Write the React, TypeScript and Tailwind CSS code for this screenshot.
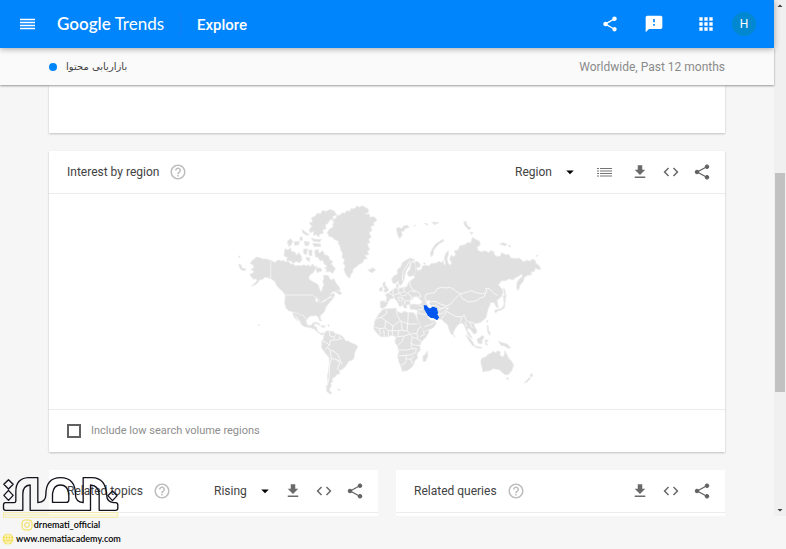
import clsx from "clsx"
import { MdApps, MdArrowDropDown, MdArrowDropUp, MdCode, MdFeedback, MdFileDownload, MdHelpOutline, MdShare } from "react-icons/md"

// outlines of the big land masses, 3 units to a pixel
const WEST_LAND: string[] = [
  // alaska
  "M60,190 66,182 72,178 80,171 90,173 98,177 108,177 121,181V236L110,232 104,232 98,238 88,240 84,248 76,254 64,258 76,248 82,240 74,236 70,238 66,232 62,230 60,222 68,220 72,214 62,208 72,204 70,196Z",
  // canada
  "M123,181 135,188 140,182 150,180 154,184 160,180 166,186 175,184 182,192 190,192 197,198 205,196 214,198 222,194 228,198 235,194 240,200 248,192 254,200 262,198 256,206 250,218 240,224 236,234 240,240 250,246 262,252 266,258 270,272 275,275 278,262 282,254 278,244 282,236 280,226 288,226 296,228 300,238 304,240 312,236 318,250 322,254 328,262 331,270 318,274 306,276 300,284 312,280 314,288 308,292 302,288 290,296 280,302 272,308 266,306 262,294 248,284H165L158,274 150,268 140,256 134,244 123,236Z",
  // usa
  "M166,286H248L258,292 256,302 262,308 266,296 270,308 282,306 292,298 304,292 312,292 300,306 292,316 286,324 284,334 274,344 270,350 274,362 270,364 264,350 258,346 248,348 240,348 234,354 230,360 226,352 220,346 212,344 204,340 190,336 176,332 168,324 164,308Z",
  // mexico and central america
  "M188,338 204,341 212,345 220,348 228,358 229,368 234,376 244,376 248,370 256,369 252,378 260,382 262,392 270,400 280,399 284,404 274,404 262,396 254,388 244,384 236,382 224,380 214,374 210,364 204,356 198,348 196,346 200,356 204,364 198,358 192,350Z",
  // greenland
  "M292,98 298,88 310,80 308,72 314,66 306,62 320,52 318,46 330,46 336,38 345,40 350,32 360,34 362,26 374,26 380,18 388,22 396,17 405,22 414,26 416,36 404,42 418,42 420,52 430,50 438,55 440,62 430,68 432,76 422,80 426,92 418,96 420,106 424,110 416,118 420,128 412,132 416,142 420,150 412,152 416,164 404,166 412,176 402,178 398,188 388,192 380,200 370,206 368,216 362,224 360,234 352,230 346,220 342,208 346,198 340,190 344,180 336,172 338,160 332,150 330,138 324,130 326,124 312,118 308,112 298,110Z",
  "M413,208 420,210 425,204 434,206 436,211 426,218 418,214Z",
  // arctic islands
  "M238,68 248,66 244,54 256,48 262,40 272,42 276,32 290,34 300,28 314,34 319,44 308,50 310,56 300,60 292,72 286,74 288,86 278,90 280,100 270,102 266,112 260,104 250,106 252,94 240,98 238,88 246,80Z",
  "M165,146 174,150 182,143 184,154 194,156 200,166 206,158 214,168 216,180 208,188 198,184 192,190 180,182 170,182 172,172 162,168Z",
  "M254,152 264,148 268,160 278,152 284,164 296,168 298,178 308,184 304,192 316,206 308,220 298,214 288,216 290,206 282,206 292,198 282,192 280,182 270,182 264,172 256,170Z",
  "M172,124 182,116 188,124 184,134 176,140Z M192,126 208,124 206,134 194,136Z M216,88 226,96 238,104 230,106 218,98Z",
  "M244,114 256,118 274,118 270,126 250,124Z M248,130 272,132 272,140 252,140Z M222,124 238,126 236,136 226,138Z M220,148 232,146 230,164 222,162Z M236,150 246,150 246,166 238,168Z M228,172 240,174 238,184 230,180Z M256,204 272,204 276,212 262,218Z M210,112 216,110 218,120 210,122Z",
  "M26,192 34,196 36,204 46,206 46,212 34,210 28,202Z M26,168h4v4h-4Z",
  "M316,276 326,272 336,280 330,284Z",
  // caribbean
  "M248,369 258,366 270,372 268,376 256,370Z M274,376 286,378 284,382 274,381Z M294,372 298,376 296,380Z",
  // south america
  "M284,398 292,392 300,394 310,394 314,400 328,404 336,408 342,414 346,422 356,424 366,430 378,434 383,440 378,450 374,458 373,470 368,480 356,484 350,494 342,504 332,510 328,514 330,520 320,524 314,532 306,536 308,544 302,550 304,558 298,566 300,574 306,580 300,582 290,574 290,560 294,544 292,530 296,510 298,490 298,474 290,464 282,454 274,442 276,432 274,426 280,418 282,408Z",
  "M322,568 330,568 328,572Z M84,374h4v2h-4Z",
]

const WEST_BORDERS =
  "M298,394 300,408 312,412 318,404M278,424 290,428 298,436M312,412 316,420 302,420 298,436 292,442 300,450 312,454 324,464 330,480 336,492M328,406V416L338,416M316,420 328,418M300,450 304,476 298,500 298,530 292,556M304,476 318,478 330,490 322,506 330,514M318,478 330,484 M292,442 284,450"

const EAST_LAND: string[] = [
  // europe and asia
  "M152,184 160,186 166,194 164,202 154,202 158,212 170,208 172,198 184,196 192,198 200,190 212,190 222,184 230,188 234,182 238,196 242,192 238,176 242,160 250,152 250,164 246,176 250,192 256,196 260,188 254,178 258,166 266,170 272,164 268,152 280,150 284,138 300,134 306,128 318,128 322,112 332,118 344,124 346,134 336,142 338,150 348,156 360,152 372,158 376,152 386,154 388,164 398,170 406,168 410,158 422,164 432,164 438,174 452,176 462,174 474,184 480,186 484,180 496,184 500,178 510,180 514,192 522,196 528,208 518,208 512,204 508,214 498,216 500,224 488,226 478,232 474,246 466,254 460,272 455,264 456,248 462,238 472,230 470,222 462,228 450,234 444,240 432,236 422,242 410,242 400,254 406,262 412,268 414,278 410,288 402,296 396,302 398,312 400,322 394,322 388,308 376,308 374,318 370,324 366,340 364,352 356,360 348,366 338,370 326,370 330,382 336,392 334,400 326,402 318,390 310,384 306,390 316,404 322,416 316,412 308,402 304,390 298,376 292,370 284,370 276,378 268,390 264,404 258,402 252,388 248,374 240,368 230,358 214,356 200,354 190,346 184,338 184,344 192,356 200,362 210,362 214,370 206,382 190,390 176,396 170,386 164,374 158,360 156,346 158,332 148,328 136,328 134,316 146,312 158,314 168,312 172,304 164,298 158,290 146,290 140,300 134,304 136,314 124,314 126,324 118,324 112,312 106,302 98,292 100,300 112,310 112,316 104,320 98,306 88,294 76,296 70,304 64,318 52,326 46,322 46,304 64,302 66,292 60,284 70,280 82,270 92,264 100,266 116,262 126,260 130,248 140,240 150,232 142,222Z",
  // scandinavia
  "M80,238 86,228 98,222 96,210 108,200 112,188 124,180 136,174 150,180 138,186 134,196 124,210 120,222 118,236 114,246 108,256 102,254 100,242 92,250 84,250Z",
  "M138,188 148,186 152,198 152,214 146,226 132,230 126,220 136,206Z",
  "M94,252 100,252 100,264 94,262Z",
  // britain and ireland
  "M54,248 62,246 60,254 66,262 72,270 64,276 56,276 60,266 54,258Z M44,264 52,262 52,272 44,274Z",
  // africa
  "M52,330 62,326 78,326 92,324 96,334 110,340 116,334 130,338 146,338 152,346 156,358 164,372 172,388 176,394 192,392 190,400 182,412 170,424 164,436 166,450 156,462 158,474 148,484 146,494 138,504 126,512 112,514 108,500 102,486 98,470 102,454 98,440 90,426 92,410 82,406 66,410 48,410 36,400 26,386 28,374 30,362 40,344Z",
  "M188,452 188,468 182,484 174,484 174,468 182,462Z",
  // islands of south east asia
  "M302,404 310,410 322,424 330,438 324,438 312,422Z M330,438 350,442 350,445 332,443Z M336,418 346,412 352,406 358,412 352,420 350,432 340,430Z M360,420 370,420 364,428 368,436 362,434Z M400,424 412,428 426,432 438,444 428,444 418,438 408,436Z M366,376 370,378 370,390 376,398 374,406 368,396Z M366,360 369,364 366,368Z M266,404 270,408 268,412Z",
  // japan and sakhalin
  "M388,332 398,328 408,326 416,318 418,304 414,302 422,294 420,310 418,324 408,330 396,334 392,340Z M414,288 424,286 422,294 416,296Z M416,264 420,270 422,284 418,284Z",
  // australia, tasmania, new zealand
  "M348,480 352,474 364,470 370,462 378,460 384,454 392,458 398,452 406,456 404,464 414,472 418,464 420,452 426,464 430,474 440,484 446,496 440,512 430,524 420,524 412,518 404,510 396,508 384,506 374,512 362,514 354,516 352,504 348,492Z M424,534 432,534 428,540Z M498,520 504,524 500,532 496,528Z M494,532 496,536 486,546 478,550 484,542Z",
  // arctic ocean
  "M94,86 102,82 110,86 116,78 128,76 132,82 120,86 116,94 108,94 112,104 104,116 98,104Z M148,76h4v2h-4Z M178,70 190,72 186,76Z M200,66 222,68 208,74Z M296,66 302,64 308,78 318,84 312,90 300,78Z M314,96 324,98 320,104Z M404,132 414,128 426,132 420,138Z M430,136 438,138 434,142Z M514,166h4v3h-4Z",
  "M234,118 236,124 224,130 214,140 206,150 204,164 198,170 196,160 202,146 212,132 224,124Z M176,188 182,190 178,194Z",
]

const EAST_BORDERS =
  "M186,314 180,292 182,284 196,280 210,278 216,266 230,262 240,264 256,262 268,270 285,282 300,278 318,272 334,278 352,282 366,276 362,266 374,266 386,280 398,286M285,282 292,296 312,306 336,302 346,294 358,290 362,278M192,306 210,304 226,312 244,318 258,312 268,298 282,284M196,318 212,316 228,326 240,322 250,328M216,330 232,326 244,320M216,344 232,340 244,330 250,322M228,356 238,346 246,334 258,342 274,350 290,350 298,346 304,362 314,366 326,368M290,352 286,368M300,366 306,380M314,366 322,384" +
  "M134,244 136,258 142,268 154,274 164,280 168,290 160,292M116,262 118,274 128,280 138,272 152,276M128,280 140,290 136,302M100,266 102,280 116,276M66,304 56,304M72,280 84,286 88,296M84,270 84,286 102,280 112,288 126,284M98,292 110,292 120,302 134,302M110,292 112,304M120,302 118,314M138,186 134,200M112,242 114,214 126,196 136,180M162,316 174,320 180,318M158,330 172,328 176,320M162,340 178,344 184,342M158,334 164,340M178,380 190,376 202,372 208,366"

const AFRICA_BORDERS =
  "M64,328 66,340 48,352 34,356M48,352 62,362 84,378 106,362 96,344 94,332M62,362 60,384 44,386 30,382M84,378 82,392 102,392 112,390 108,364M106,362 128,372 130,340M128,372 156,372M128,372 126,392 112,392M126,392 136,402 156,400 160,386 168,380M60,384 70,392 82,392M44,386 46,404M56,390 58,408M70,392 70,408M82,392 82,406M102,392 98,410 92,414M98,410 118,408 134,402M118,408 112,424 98,436M134,402 142,412 138,430 142,446 124,450 102,450M138,430 152,436 166,436M156,400 158,418 170,424M142,412 158,416M176,394 178,404 164,410M142,446 154,446 152,458 138,464 124,466 102,468M124,466 122,488 108,496M124,476 138,478 146,468M138,478 142,492"

function WorldMap () {
  return (
    <svg className="block h-[215px] w-full" viewBox="49 194 676 215" role="img" aria-label="Interest by region, worldwide">
      <g transform="translate(230 200) scale(.33333)" strokeLinejoin="round">
        {WEST_LAND.map((d) => <path key={d} d={d} fill="#e0e0e0" stroke="#ebebeb" strokeWidth="2.5" />)}
        <path d={WEST_BORDERS} fill="none" stroke="#f7f7f7" strokeWidth="3" />
      </g>
      <g transform="translate(365 200) scale(.33333)" strokeLinejoin="round">
        {EAST_LAND.map((d) => <path key={d} d={d} fill="#e0e0e0" stroke="#ebebeb" strokeWidth="2.5" />)}
        <path d={EAST_BORDERS + AFRICA_BORDERS} fill="none" stroke="#f7f7f7" strokeWidth="3" />
        {/* caspian sea */}
        <path d="M188,300 196,302 192,308 198,318 196,326 190,320 186,308Z" fill="#fff" />
        {/* iran */}
        <path d="M178,318 184,318 188,324 196,328 204,322 214,326 217,338 215,344 220,352 216,358 206,352 198,352 190,346 186,338 180,328Z" fill="#0057f0" stroke="#0057f0" strokeWidth="4" />
      </g>
    </svg>
  )
}

function MenuIcon () {
  return (
    <svg className="h-3 w-[15px]" viewBox="0 0 15 12" stroke="#fff" strokeWidth="1.4" aria-hidden="true">
      <path d="M0 1.5h15M0 4.5h15M0 7.5h15M0 10.5h15" />
    </svg>
  )
}

function ListIcon () {
  return (
    <svg className="h-[18px] w-4" viewBox="0 0 16 18" stroke="#757575" strokeWidth="1.2" aria-hidden="true">
      <path d="M0 5.5h2M3 5.5h12M0 8h2M3 8h12M0 10.5h2M3 10.5h12M0 13h2M3 13h12" />
    </svg>
  )
}

function ShareIcon () {
  return (
    <svg className="size-[18px]" viewBox="0 0 18 18" fill="#616161" stroke="#616161" aria-hidden="true">
      <path d="M13.8 3.8 4.2 9l9.6 5.2" fill="none" strokeWidth="1.2" />
      <circle cx="14" cy="3.7" r="1.8" />
      <circle cx="4" cy="9" r="1.8" />
      <circle cx="14" cy="14.3" r="1.8" />
    </svg>
  )
}

function CardActions () {
  return (
    <div className="flex items-center gap-[13px] text-[#6a6a6a]">
      <button type="button" aria-label="Download"><MdFileDownload size={18} /></button>
      <button type="button" aria-label="Embed"><MdCode size={18} /></button>
      <button type="button" aria-label="Share"><ShareIcon /></button>
    </div>
  )
}

function CardTitle ({ children }: { children: React.ReactNode }) {
  return (
    <div className="flex items-center gap-2.5">
      <h2 className="text-xs text-[#424242]">{children}</h2>
      <button type="button" aria-label="Help" className="text-[#bdbdbd]"><MdHelpOutline size={18} /></button>
    </div>
  )
}

function Dropdown ({ label, options, className }: { label: string; options: string[]; className: string }) {
  return (
    <div className={clsx("relative", className)}>
      <select aria-label={label} className="block w-full appearance-none bg-transparent text-xs text-[#424242]">
        {options.map((option) => <option key={option}>{option}</option>)}
      </select>
      <MdArrowDropDown size={18} className="pointer-events-none absolute -top-px right-0 text-black" />
    </div>
  )
}

function Watermark () {
  return (
    <div className="absolute bottom-[3px] left-0.5 flex w-[117px] flex-col font-[Lato,sans-serif] text-[9px] leading-[14px] font-semibold text-black">
      <svg className="h-[41px] w-full" viewBox="6 26 350 123" fill="none" aria-hidden="true">
        <g stroke="#14141e" strokeWidth="4" strokeLinejoin="round">
          <path d="M16,126H68V76Q68,52 90,50V126H271V50Q297,52 297,80V126H346q7,0 7,-7V110q0,-7 -7,-7H340Q320,100 320,84 318,28 275,28H249V103Q226,100 226,80 226,28 181,28 137,28 137,80 137,100 113,103V28H84Q47,30 47,70V98q0,5 -5,5H16q-6,0 -6,7V119q0,7 6,7Z" />
          <path d="M157,102V76Q160,50 181,50 202,50 206,76V94q0,8 -8,8Z" />
          <path d="M25,34 39,48 25,62 11,48ZM25,66 39,81 25,96 11,81ZM337,68 351,82 337,97 323,82Z" />
        </g>
        <path d="M10,133H353V147H10ZM10,140H353" stroke="#f4e57c" strokeWidth="2" />
      </svg>
      <a href="#instagram" className="flex items-center justify-center gap-px">
        <svg className="size-3" viewBox="0 0 12 12" fill="none" stroke="#f2dc4e" aria-hidden="true">
          <rect x="1" y="1" width="10" height="10" rx="3" />
          <circle cx="6" cy="6" r="2.4" />
          <path d="M8.5 3.2h.8" />
        </svg>
        drnemati_official
      </a>
      <a href="#site" className="flex items-center gap-0.5">
        <svg className="size-3 shrink-0" viewBox="0 0 12 12" aria-hidden="true">
          <circle cx="6" cy="6" r="5.5" fill="#f2dc4e" />
          <path d="M6 0v12M0 6h12M1.5 3h9M1.5 9h9M6 .5C2.4 3.5 2.4 8.5 6 11.5M6 .5c3.6 3 3.6 8 0 11" fill="none" stroke="#fffbe0" strokeWidth=".7" />
        </svg>
        www.nematiacademy.com
      </a>
    </div>
  )
}

export default function App () {
  return (
    <div className="relative min-h-screen bg-[#f6f6f6] pb-[33px] font-[Roboto,sans-serif]">
      <div className="flex h-[calc(100vh-33px)] overflow-hidden">

        <div className="flex min-w-0 flex-1 flex-col">
          <header className="z-20 flex h-12 shrink-0 items-center bg-[#0085fc] pr-[18px] pl-5 text-white shadow-[0_1px_6px_rgba(0,0,0,0.35)]">
            <button type="button" aria-label="Main menu"><MenuIcon /></button>
            <a href="#home" className="ml-[22px] flex gap-1 font-[Lato,sans-serif] text-[17px]">
              <span className="font-semibold">Google</span>
              <span>Trends</span>
            </a>
            <div className="ml-4 h-6 border-l border-[#0f7ef0]" />
            <h1 className="ml-4 pt-0.5 text-[15px] font-medium">Explore</h1>

            <div className="ml-auto flex items-center">
              <button type="button" aria-label="Share"><MdShare size={18} /></button>
              <button type="button" aria-label="Send feedback" className="ml-[25px]"><MdFeedback size={20} /></button>
              <button type="button" aria-label="Google apps" className="ml-8"><MdApps size={20} /></button>
              <button type="button" aria-label="Account" className="ml-4 size-6 rounded-full bg-[#0288d1] text-xs">H</button>
            </div>
          </header>

          <div className="z-10 flex h-[37px] shrink-0 items-center bg-[#fafafa] px-[49px] shadow-[0_1px_2px_rgba(0,0,0,0.4)]">
            <span className="size-2 rounded-full bg-[#0085fc]" />
            <span lang="fa" dir="rtl" className="ml-[9px] font-['DejaVu_Sans',sans-serif] text-[10px] text-[#424242]">بازاریابی محتوا</span>
            <span className="ml-auto text-xs text-[#8a8a8a]">Worldwide, Past 12 months</span>
          </div>

          <main className="flex flex-col gap-[18px] px-[49px]">
            <section className="h-12 bg-white shadow-[0_1px_2px_rgba(0,0,0,0.22)]" />

            <section className="bg-white shadow-[0_1px_2px_rgba(0,0,0,0.22)]">
              <div className="flex h-[43px] items-center justify-between border-b border-[#ececec] pr-3.5 pl-[18px]">
                <CardTitle>Interest by region</CardTitle>
                <div className="flex items-center gap-[18px]">
                  <Dropdown label="Resolution" options={["Region", "City"]} className="w-16" />
                  <button type="button" aria-label="Show as list"><ListIcon /></button>
                  <CardActions />
                </div>
              </div>
              <WorldMap />
              <label className="flex h-[43px] items-center gap-2.5 border-t border-[#ececec] pl-[18px] text-[11px] text-[#8e8e8e]">
                <input type="checkbox" className="size-3.5 appearance-none border-2 border-[#616161]" />
                Include low search volume regions
              </label>
            </section>

            <div className="grid grid-cols-2 gap-[18px]">
              <section className="h-24 bg-white">
                <div className="flex h-[43px] items-center justify-between border-b border-[#ececec] pr-3.5 pl-[18px]">
                  <CardTitle>Related topics</CardTitle>
                  <div className="flex items-center gap-2.5">
                    <Dropdown label="Sort topics by" options={["Rising", "Top"]} className="w-[60px]" />
                    <CardActions />
                  </div>
                </div>
              </section>
              <section className="h-24 bg-white">
                <div className="flex h-[43px] items-center justify-between border-b border-[#ececec] pr-3.5 pl-[18px]">
                  <CardTitle>Related queries</CardTitle>
                  <CardActions />
                </div>
              </section>
            </div>
          </main>
        </div>

        {/* scrollbar */}
        <div className="flex w-3 flex-col items-center bg-[#f0f0f0]">
          <MdArrowDropUp size={12} className="shrink-0 text-[#404040]" />
          <div className="grow-[161]" />
          <div className="w-2.5 grow-[219] bg-[#c1c1c1]" />
          <div className="grow-[112]" />
          <MdArrowDropDown size={12} className="shrink-0 text-[#404040]" />
        </div>
      </div>

      <Watermark />
    </div>
  )
}
